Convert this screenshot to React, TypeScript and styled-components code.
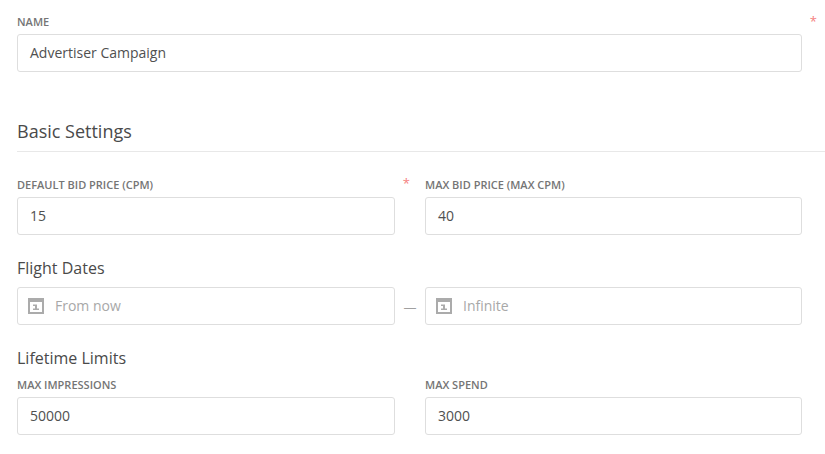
import React from "react";
import { styled, createGlobalStyle } from "styled-components";

const GlobalStyle = createGlobalStyle`
  html, body {
    margin: 0;
    padding: 0;
    background: #fff;
  }
  body {
    font-family: "Open Sans", "Liberation Sans", sans-serif;
    color: #444;
  }
`;

const Page = styled.div`
  width: 825px;
  height: 454px;
  padding: 15px 0 0 17px;
  box-sizing: border-box;
  overflow: hidden;
`;

const Column = styled.div`
  width: 785px;
`;

const Row = styled.div<{ $top?: number }>`
  display: grid;
  grid-template-columns: 378px 377px;
  column-gap: 30px;
  margin-top: ${({ $top }) => $top ?? 0}px;
`;

const Field = styled.div`
  position: relative;
`;

const Label = styled.label`
  display: block;
  height: 19px;
  font-size: 11px;
  line-height: 13px;
  font-weight: 600;
  text-transform: uppercase;
  color: #757575;
`;

const Star = styled.span<{ $right: number; $top: number }>`
  position: absolute;
  top: ${({ $top }) => $top}px;
  right: ${({ $right }) => $right}px;
  font-size: 13px;
  line-height: 16px;
  color: #f58080;
`;

const Box = styled.div<{ $icon?: boolean }>`
  display: flex;
  align-items: center;
  height: 38px;
  padding: 0 12px 0 ${({ $icon }) => ($icon ? 10 : 12)}px;
  box-sizing: border-box;
  border: 1px solid #dedede;
  border-radius: 3px;
  background: #fff;
`;

const Value = styled.span<{ $placeholder?: boolean }>`
  font-size: 14px;
  line-height: 20px;
  color: ${({ $placeholder }) => ($placeholder ? "#a8a8a8" : "#505050")};
`;

const Section = styled.h2`
  margin: 47px -23px 0 0;
  padding-bottom: 7px;
  border-bottom: 1px solid #e8e8e8;
  font-size: 18px;
  line-height: 25px;
  font-weight: 400;
  color: #4a4a4a;
`;

const SubHeading = styled.h3<{ $top: number; $bottom: number }>`
  margin: ${({ $top }) => $top}px 0 ${({ $bottom }) => $bottom}px;
  font-size: 16px;
  line-height: 22px;
  font-weight: 400;
  color: #4a4a4a;
`;

const DateRow = styled.div`
  display: grid;
  grid-template-columns: 378px 30px 377px;
`;

const Dash = styled.span`
  align-self: center;
  text-align: center;
  margin-top: 1px;
  font-size: 13px;
  line-height: 20px;
  color: #a0a0a0;
`;

const IconWrap = styled.span`
  display: flex;
  margin-right: 11px;
`;

const CalendarIcon: React.FC = () => (
  <IconWrap>
    <svg width="16" height="16" viewBox="0 0 16 16" aria-hidden="true">
      <path
        fill="#ababab"
        fillRule="evenodd"
        d="M0 0h16v16H0zM2 4v10h12V4zM5 6.500h4v4h2V12H5v-1.500h2V8H5z"
      />
    </svg>
  </IconWrap>
);

const App: React.FC = () => (
  <Page>
    <GlobalStyle />
    <Column>
      <Field>
        <Label>Name</Label>
        <Star $right={-15} $top={-2}>
          *
        </Star>
        <Box>
          <Value>Advertiser Campaign</Value>
        </Box>
      </Field>

      <Section>Basic Settings</Section>

      <Row $top={26}>
        <Field>
          <Label>Default Bid Price (CPM)</Label>
          <Star $right={-15} $top={-3}>
            *
          </Star>
          <Box>
            <Value>15</Value>
          </Box>
        </Field>
        <Field>
          <Label>Max Bid Price (Max CPM)</Label>
          <Box>
            <Value>40</Value>
          </Box>
        </Field>
      </Row>

      <SubHeading $top={22} $bottom={8}>
        Flight Dates
      </SubHeading>
      <DateRow>
        <Box $icon>
          <CalendarIcon />
          <Value $placeholder>From now</Value>
        </Box>
        <Dash>—</Dash>
        <Box $icon>
          <CalendarIcon />
          <Value $placeholder>Infinite</Value>
        </Box>
      </DateRow>

      <SubHeading $top={22} $bottom={9}>
        Lifetime Limits
      </SubHeading>
      <Row>
        <Field>
          <Label>Max Impressions</Label>
          <Box>
            <Value>50000</Value>
          </Box>
        </Field>
        <Field>
          <Label>Max Spend</Label>
          <Box>
            <Value>3000</Value>
          </Box>
        </Field>
      </Row>
    </Column>
  </Page>
);

export default App;
